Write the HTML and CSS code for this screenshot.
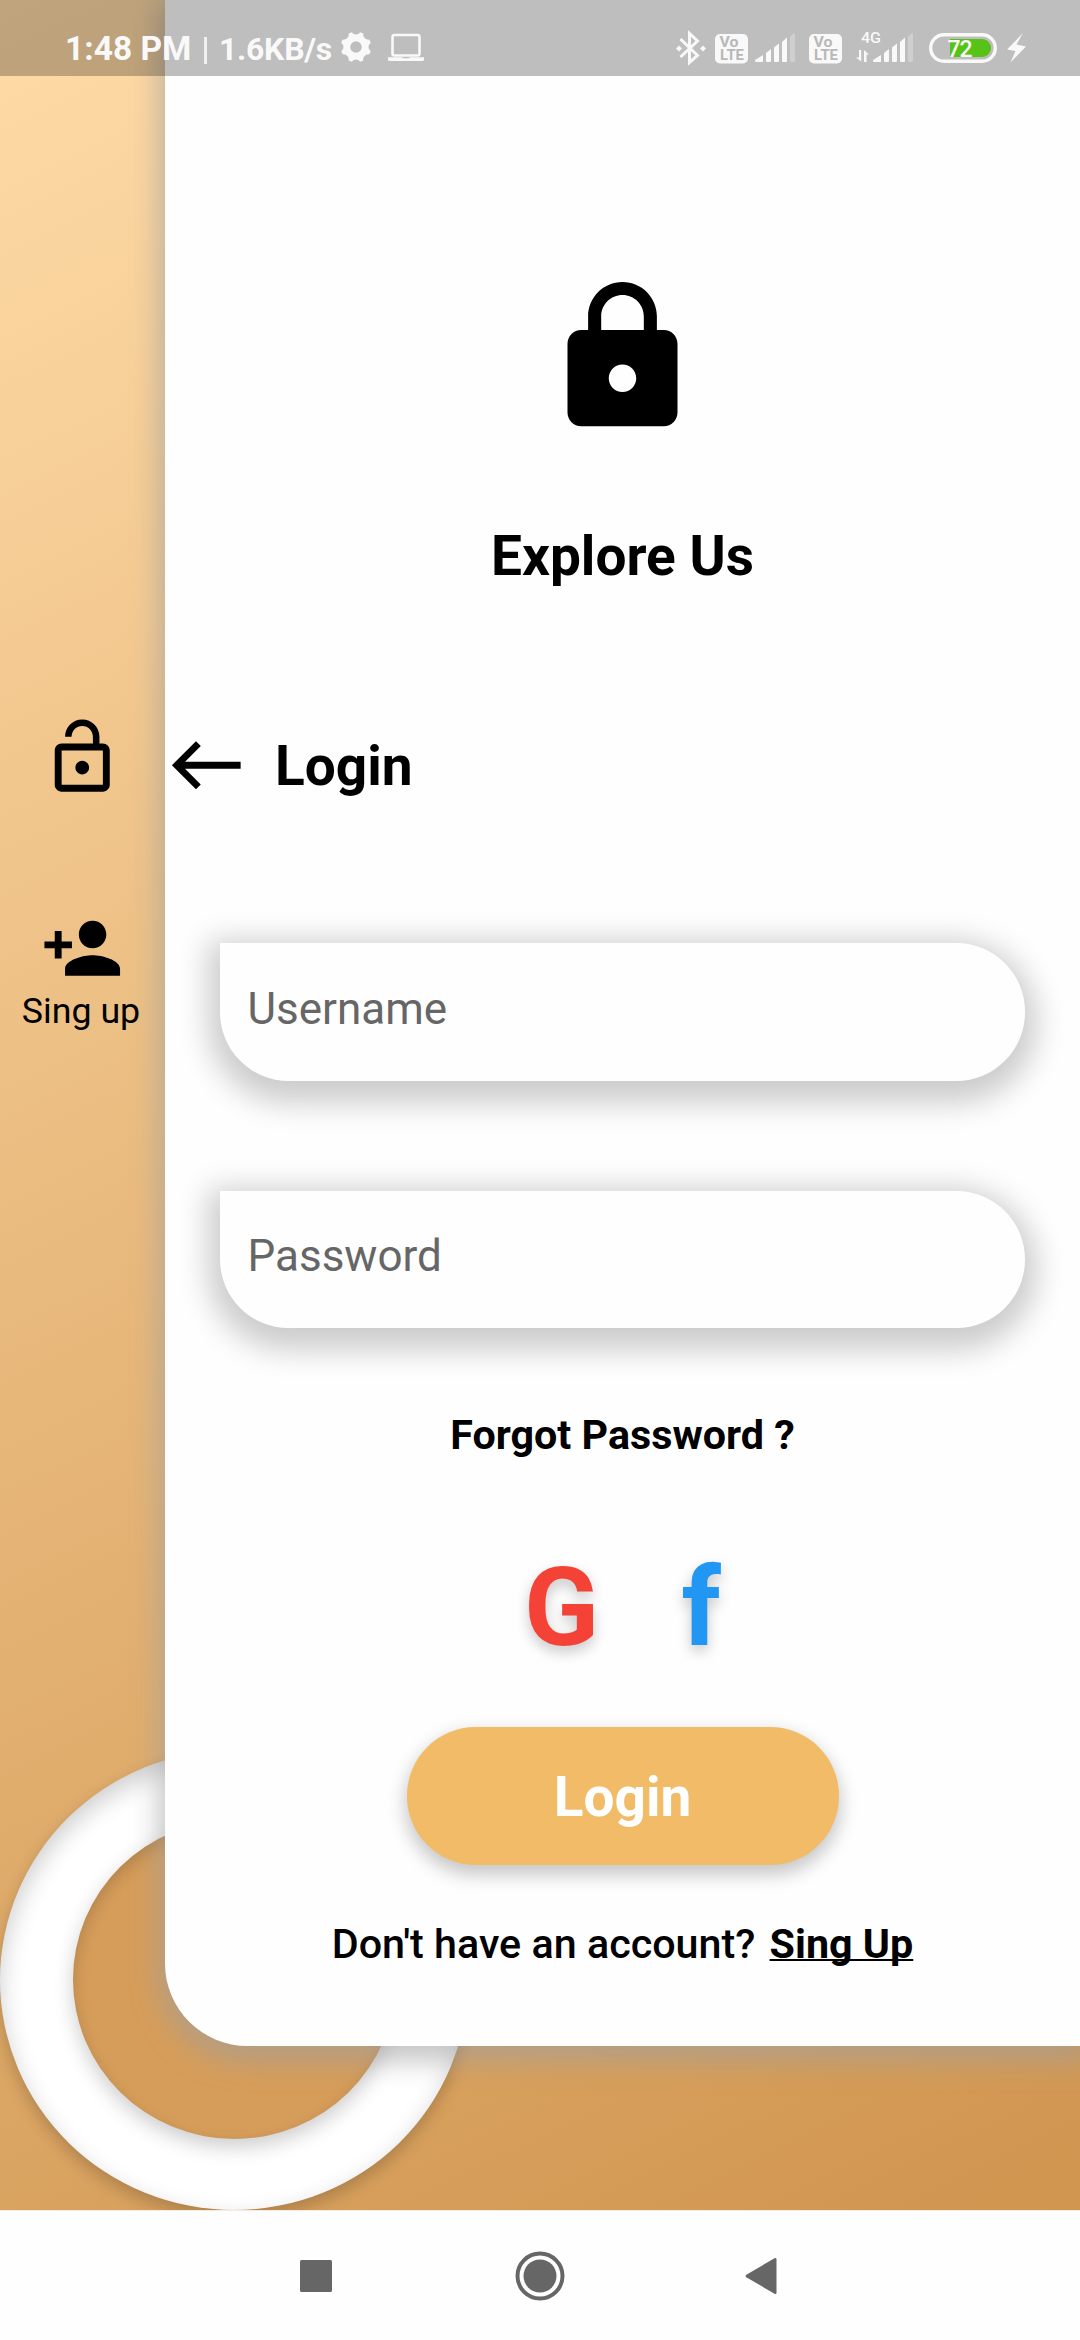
FILE: index.html
```html
<!DOCTYPE html>
<html lang="en">
<head>
<meta charset="utf-8">
<title>Login</title>
<link rel="stylesheet" href="styles.css">
</head>
<body>
<div class="phone">
  <header class="status">
    <span class="time">1:48 PM</span>
    <span class="divider"></span>
    <span class="speed">1.6KB/s</span>
    <svg class="gear" width="30" height="30" viewBox="0 0 30 30"><path fill="currentColor" fill-rule="evenodd" d="M7.6 1.6 11 0.2 C12.5 3.2 17.500 3.200 19 .2L22.400 1.600C21.400 4.800 25.200 8.600 28.400 7.600L29.800 11C26.800 12.500 26.800 17.500 29.800 19L28.400 22.400C25.200 21.400 21.400 25.200 22.400 28.400L19 29.800C17.500 26.800 12.500 26.800 11 29.800L7.600 28.400C8.600 25.200 4.800 21.400 1.600 22.400L.2 19C3.200 17.500 3.200 12.500 .2 11L1.600 7.600C4.800 8.600 8.600 4.800 7.600 1.600ZM15 9.200a5.800 5.800 0 1 0 0 11.600a5.800 5.800 0 0 0 0-11.600Z"/></svg>
    <svg class="laptop" width="36" height="28" viewBox="0 0 36 28"><rect x="4.500" y="1" width="27" height="20.500" rx="2" fill="none" stroke="currentColor" stroke-width="2.600"/><path fill="currentColor" d="M0 23.300h14l1.500 1h5l1.500-1h14v2.200q0 1.500-1.500 1.500h-33Q0 27 0 25.500Z"/></svg>
    <span class="spacer"></span>
    <svg class="bt" width="30" height="34" viewBox="0 0 30 34"><path fill="none" stroke="currentColor" stroke-width="3" d="M4.500 8 21.500 24.500 13.500 31.500V2.500L21.500 10 4.500 26"/><path fill="currentColor" d="M3 14.500 6 17.500 3 20.500 0 17.500ZM27 14.500l3 3-3 3-3-3Z"/></svg>
    <svg class="volte" width="33" height="30" viewBox="0 0 33 30"><rect width="33" height="29.500" rx="5" fill="currentColor"/><g class="volte-text"><text x="4.500" y="13" textLength="19" lengthAdjust="spacingAndGlyphs">Vo</text><text x="5" y="26" textLength="24" lengthAdjust="spacingAndGlyphs">LTE</text></g></svg>
    <svg class="bars" width="40" height="30" viewBox="0 0 40 30"><path fill="currentColor" d="M0 27 8 22V29H1Q0 29 0 28ZM11 20l5-4v12q0 1-1 1h-3q-1 0-1-1ZM19 14.500l5-4V28q0 1-1 1h-3q-1 0-1-1ZM27 9l5-4.500V28q0 1-1 1h-3q-1 0-1-1Z"/><path fill="currentColor" opacity=".3" d="M35 4l3-3.500q2-1 2 1V28q0 1-1 1h-3q-1 0-1-1Z"/></svg>
    <svg class="volte volte-second" width="33" height="30" viewBox="0 0 33 30"><rect width="33" height="29.500" rx="5" fill="currentColor"/><g class="volte-text"><text x="4.500" y="13" textLength="19" lengthAdjust="spacingAndGlyphs">Vo</text><text x="5" y="26" textLength="24" lengthAdjust="spacingAndGlyphs">LTE</text></g></svg>
    <svg class="network" width="57" height="32" viewBox="0 0 57 32"><text class="network-text" x="5" y="12" textLength="20" lengthAdjust="spacingAndGlyphs">4G</text><path fill="currentColor" d="M3 19h2.200V30.500L0 26.500H3ZM8 19l5 4.500h-2.500V31H8Z"/><path fill="currentColor" d="M17 29 25 24V31H18Q17 31 17 30ZM28 22l5-4v12q0 1-1 1h-3q-1 0-1-1ZM36 16.500l5-4V30q0 1-1 1h-3q-1 0-1-1ZM44 11l5-4.500V30q0 1-1 1h-3q-1 0-1-1Z"/><path fill="currentColor" opacity=".3" d="M52 6l3-3.500q2-1 2 1V30q0 1-1 1h-3q-1 0-1-1Z"/></svg>
    <svg class="battery" width="68" height="30" viewBox="0 0 68 30"><rect x="1.700" y="1.700" width="64.600" height="26.600" rx="13.300" fill="none" stroke="currentColor" stroke-width="3.400"/><path fill="#57c316" d="M21 6H53.500a8.500 9 0 0 1 0 18H21Z"/><text class="battery-text" x="18.500" y="24" textLength="25">72</text></svg>
    <svg class="bolt" width="19" height="30" viewBox="0 0 19 30"><path fill="currentColor" d="M16 0 9.500 11.500 19 13.500 3.500 29.500 8.500 18 0 16.500Z"/></svg>
  </header>

  <main class="app">
    <div class="ring"><div class="ring-hole"></div></div>

    <nav class="rail">
      <svg class="icon" viewBox="0 0 24 24"><path d="M12 17c1.100 0 2-.9 2-2s-.9-2-2-2-2 .9-2 2 .9 2 2 2zm6-9h-1V6c0-2.760-2.240-5-5-5S7 3.240 7 6h1.900c0-1.710 1.390-3.100 3.100-3.100s3.100 1.390 3.100 3.100v2H6c-1.100 0-2 .9-2 2v10c0 1.100.9 2 2 2h12c1.100 0 2-.9 2-2V10c0-1.100-.9-2-2-2zm0 12H6V10h12v10z"/></svg>
      <a class="rail-item">
        <svg class="icon" viewBox="0 0 24 24"><path d="M15 12c2.210 0 4-1.790 4-4s-1.790-4-4-4-4 1.790-4 4 1.790 4 4 4zm-9-2V7H4v3H1v2h3v3h2v-3h3v-2H6zm9 4c-2.670 0-8 1.340-8 4v2h16v-2c0-2.660-5.330-4-8-4z"/></svg>
        <span class="rail-label">Sing up</span>
      </a>
    </nav>

    <section class="panel">
      <svg class="lock" viewBox="0 0 24 24"><path d="M18 8h-1V6c0-2.760-2.240-5-5-5S7 3.240 7 6v2H6c-1.100 0-2 .9-2 2v10c0 1.100.9 2 2 2h12c1.100 0 2-.9 2-2V10c0-1.100-.9-2-2-2zm-6 9c-1.100 0-2-.9-2-2s.9-2 2-2 2 .9 2 2-.9 2-2 2zm3.100-9H8.900V6c0-1.710 1.390-3.100 3.100-3.100 1.710 0 3.100 1.390 3.100 3.100v2z"/></svg>
      <h1 class="title">Explore Us</h1>
      <div class="heading">
        <svg class="icon" viewBox="0 0 24 24"><path d="M9 19l1.410-1.410L5.830 13H22v-2H5.830l4.590-4.590L9 5l-7 7 7 7z"/></svg>
        <h2 class="title">Login</h2>
      </div>
      <div class="fields">
        <label class="field"><span>Username</span></label>
        <label class="field"><span>Password</span></label>
      </div>
      <a class="forgot">Forgot Password ?</a>
      <div class="social"><span class="google">G</span><span class="facebook">f</span></div>
      <button class="submit">Login</button>
      <p class="account">Don't have an account? <a class="signup">Sing Up</a></p>
    </section>
  </main>

  <footer class="system-nav">
    <svg width="32" height="32" viewBox="0 0 32 32"><rect width="32" height="32" rx="1.500"/></svg>
    <svg class="home" width="50" height="50" viewBox="0 0 50 50"><circle cx="25" cy="25" r="22.500" fill="none" stroke="#666" stroke-width="4"/><circle cx="25" cy="25" r="16.500"/></svg>
    <svg width="32" height="38" viewBox="0 0 32 38"><path d="M29.500 1.300Q31.500.2 31.500 2.500V35.500Q31.500 37.800 29.500 36.700L1.300 20.300Q-.2 19 1.300 17.700Z"/></svg>
  </footer>
</div>
</body>
</html>
```

FILE: styles.css
```css
* { box-sizing: border-box; }

body {
  margin: 0;
  font-family: Roboto, "Liberation Sans", sans-serif;
  color: #000;
}

.phone {
  position: relative;
  display: flex;
  flex-direction: column;
  width: 1080px;
  height: 2340px;
  overflow: hidden;
}

/* Status bar: translucent, lies over the app */
.status {
  position: absolute;
  inset: 0 0 auto;
  z-index: 2;
  display: flex;
  align-items: flex-start;
  height: 76px;
  padding: 0 54px 0 65px;
  background: rgba(0, 0, 0, .25);
  color: #f9f9f9;
  font-weight: 700;
  white-space: nowrap;
}
.status svg { flex: none; overflow: visible; }
.time { width: 130px; padding-top: 29px; font-size: 33.500px; line-height: 39px; }
.divider { width: 3px; height: 27px; margin: 37px 0 0 9px; background: #f9f9f9; opacity: .85; }
.speed { width: 122px; margin-left: 12px; padding-top: 30px; font-size: 32px; line-height: 38px; letter-spacing: -.3px; }
.gear { margin-top: 32px; }
.laptop { margin: 34px 0 0 17px; }
.spacer { flex: 1; }
.bt { margin: 31px 9px 0 0; }
.volte { margin: 34px 7px 0 0; }
.bars { margin: 33px 14px 0 0; }
.volte-second { margin-right: 14px; }
.network { margin: 31px 16px 0 0; }
.battery { margin: 33px 10px 0 0; }
.bolt { margin-top: 33px; }
.volte-text { fill: #b8b8b8; font-size: 14px; font-weight: 700; }
.network-text { fill: #f9f9f9; font-size: 15.500px; font-weight: 500; }
.battery-text { fill: #f9f9f9; font-size: 23px; font-weight: 500; }

/* App area */
.app {
  position: relative;
  display: flex;
  height: 2210px;
  overflow: hidden;
  background: linear-gradient(154deg, #ffdba7, #d0954f);
}

.ring {
  position: absolute;
  left: 0;
  bottom: 0;
  width: 468px;
  height: 460px;
  padding: 70px 72.500px;
  border-radius: 50%;
  background: #fff;
  box-shadow: 0 7px 16px rgba(0, 0, 0, .2), inset 0 10px 24px rgba(0, 0, 0, .2);
}
.ring-hole {
  width: 323px;
  height: 319px;
  border-radius: 50%;
  background: #d69d5a;
  box-shadow: 0 8px 20px rgba(0, 0, 0, .2), inset 0 7px 16px rgba(0, 0, 0, .17);
}

.icon { flex: none; width: 82.500px; height: 82.500px; }

.rail {
  position: relative;
  display: flex;
  flex-direction: column;
  align-items: center;
  gap: 109px;
  width: 165px;
  padding-top: 715.500px;
}
.rail-item {
  display: flex;
  flex-direction: column;
  align-items: center;
  font-size: 35.750px;
  line-height: 42px;
}
.rail-label { padding-right: 3px; }

.panel {
  position: relative;
  display: flex;
  flex-direction: column;
  align-items: center;
  flex: 1;
  height: 2046px;
  padding-top: 275px;
  border-bottom-left-radius: 82.500px;
  background: #fefefe;
  box-shadow: 0 9px 26px 7px rgba(158, 158, 158, .58);
}
.lock { width: 165px; height: 165px; margin-bottom: 84px; }
.title { margin: 0; font-size: 55px; font-weight: 700; line-height: 64px; }
.heading {
  display: flex;
  align-items: center;
  align-self: stretch;
  gap: 27.500px;
  margin: 135.500px 0 137px;
}
.heading .title { padding-top: 2px; }
.fields {
  display: flex;
  flex-direction: column;
  align-self: stretch;
  gap: 110px;
  margin: 0 55px 83px;
}
.field {
  display: flex;
  align-items: center;
  height: 137.500px;
  padding: 0 27.500px 6px;
  border-radius: 0 68.750px 68.750px;
  background: #fefefe;
  box-shadow: 0 10px 30px 12px rgba(0, 0, 0, .2);
  color: #666;
  font-size: 44px;
}
.forgot { font-size: 41.250px; font-weight: 700; line-height: 48px; }
.social {
  display: flex;
  gap: 82.500px;
  margin: 84px 0 55px;
  font-size: 110px;
  font-weight: 700;
  line-height: 129px;
  text-shadow: 0 6px 14px rgba(0, 0, 0, .22);
}
.google { color: #f44336; }
.facebook { color: #2196f3; }
.submit {
  width: 432px;
  height: 137.500px;
  padding: 2px 0 0;
  border: 0;
  border-radius: 68.750px;
  background: #f1bb67;
  box-shadow: 0 8px 18px 2px rgba(0, 0, 0, .22);
  color: #fff;
  font: 700 55px/64px Roboto, sans-serif;
}
.account { margin: 55.500px 0 0; font-size: 41.250px; font-weight: 500; line-height: 48px; }
.signup { margin-left: 4px; font-weight: 700; text-decoration: underline; text-decoration-thickness: 2px; text-decoration-skip-ink: none; }

/* Android navigation buttons */
.system-nav {
  display: flex;
  align-items: center;
  justify-content: space-between;
  height: 130px;
  padding: 0 303px 0 300px;
  border-top: 1px solid #f6e9dd;
  background: #fefefe;
  fill: #666;
}
.home { margin-left: 3px; }
```
